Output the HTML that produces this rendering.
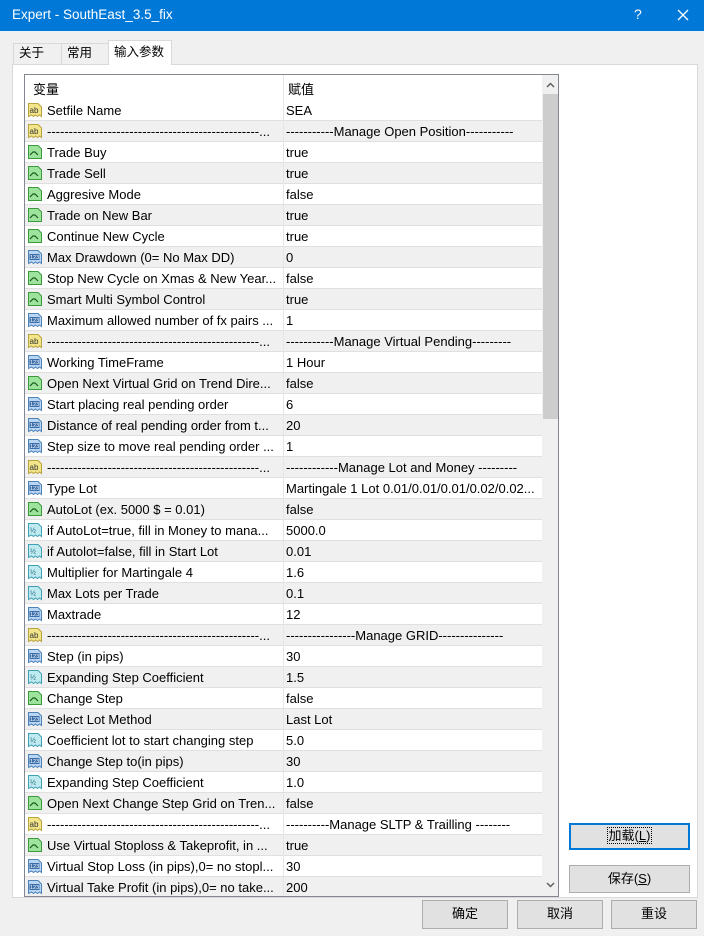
<!DOCTYPE html>
<html><head><meta charset="utf-8"><style>
*{margin:0;padding:0;box-sizing:border-box}
body{width:704px;height:936px;background:#f0f0f0;font-family:"Liberation Sans","Noto Sans CJK SC",sans-serif;font-size:13px;color:#000;position:relative;overflow:hidden}
.title{position:absolute;left:0;top:0;width:704px;height:31px;background:#0078d7;color:#fff;font-size:13.5px}
.abs{position:absolute}
.tab{position:absolute;top:43px;height:21px;border:1px solid #d9d9d9;border-bottom:none;background:#f0f0f0;font-size:12.5px;padding:0 5px;line-height:19px}
.panel{position:absolute;left:12px;top:64px;width:686px;height:834px;background:#fff;border:1px solid #d9d9d9}
.tbl{position:absolute;left:24px;top:74px;width:535px;height:823px;border:1px solid #828790;background:#fff;overflow:hidden}
.row{position:absolute;left:0;width:517px;height:21px;border-bottom:1px solid #e0e0e0}
.row.g{background:#f0f0f0}
.row span{position:absolute;top:3px;white-space:nowrap;overflow:hidden}
.n{left:22px;width:235px}
.v{left:261px;width:254px}
.row .ic{position:absolute;left:2px;top:2px;width:16px;height:16px}
.col{position:absolute;left:258px;top:0;width:1px;height:823px;background:#e5e5e5}
.sb{position:absolute;left:517px;top:0;width:17px;height:821px;background:#f0f0f0}
.btn{position:absolute;background:#e1e1e1;border:1px solid #adadad;text-align:center;line-height:26px;font-size:13px}
</style></head><body>
<div class="title"><span class="abs" style="left:12px;top:7px">Expert - SouthEast_3.5_fix</span><span class="abs" style="left:634px;top:6px;font-size:14px">?</span>
<svg class="abs" style="left:677px;top:9px" width="12" height="12"><path d="M1 1L11 11M11 1L1 11" stroke="#fff" stroke-width="1.3"/></svg></div>
<div class="tab" style="left:13px;width:49px">关于</div>
<div class="tab" style="left:61px;width:48px">常用</div>
<div class="panel"></div>
<div class="tab" style="left:108px;top:40px;width:64px;height:25px;background:#fff;z-index:2;line-height:22px">输入参数</div>
<div class="tbl">
<div class="abs" style="left:0;top:0;width:517px;height:25px;background:#fff"><span class="abs" style="left:8px;top:4px">变量</span><span class="abs" style="left:263px;top:4px">赋值</span></div>
<div id="rows"></div>
<div class="col"></div>
<div class="sb">
<svg class="abs" style="left:4px;top:7px" width="9" height="6"><path d="M1 5L4.5 1.5L8 5" stroke="#606060" stroke-width="1.5" fill="none"/></svg>
<div class="abs" style="left:1px;top:19px;width:15px;height:325px;background:#cdcdcd"></div>
<svg class="abs" style="left:4px;top:807px" width="9" height="6"><path d="M1 1L4.5 4.5L8 1" stroke="#606060" stroke-width="1.5" fill="none"/></svg>
</div>
</div>
<div class="btn" style="left:569px;top:823px;width:121px;height:27px;border:2px solid #0078d7;line-height:22px"><span style="outline:1px dotted #000;padding:0 1px">加载(<u>L</u>)</span></div>
<div class="btn" style="left:569px;top:865px;width:121px;height:28px">保存(<u>S</u>)</div>
<div class="btn" style="left:422px;top:900px;width:86px;height:29px">确定</div>
<div class="btn" style="left:517px;top:900px;width:86px;height:29px">取消</div>
<div class="btn" style="left:611px;top:900px;width:86px;height:29px">重设</div>
<script>
var S='ab',B='b',I='i',D='d';
var DS='-------------------------------------------------...';
var rows=[
[S,'Setfile Name','SEA'],
[S,DS,'-----------Manage Open Position-----------'],
[B,'Trade Buy','true'],[B,'Trade Sell','true'],[B,'Aggresive Mode','false'],[B,'Trade on New Bar','true'],[B,'Continue New Cycle','true'],
[I,'Max Drawdown (0= No Max DD)','0'],[B,'Stop New Cycle on Xmas &amp; New Year...','false'],[B,'Smart Multi Symbol Control','true'],
[I,'Maximum allowed number of fx pairs ...','1'],
[S,DS,'-----------Manage Virtual Pending---------'],
[I,'Working TimeFrame','1 Hour'],[B,'Open Next Virtual Grid on Trend Dire...','false'],[I,'Start placing real pending order','6'],
[I,'Distance of real pending order from t...','20'],[I,'Step size to move real pending order ...','1'],
[S,DS,'------------Manage Lot and Money ---------'],
[I,'Type Lot','Martingale 1 Lot 0.01/0.01/0.01/0.02/0.02...'],[B,'AutoLot (ex. 5000 $ = 0.01)','false'],
[D,'if AutoLot=true, fill in Money to mana...','5000.0'],[D,'if Autolot=false, fill in Start Lot','0.01'],
[D,'Multiplier for Martingale 4','1.6'],[D,'Max Lots per Trade','0.1'],[I,'Maxtrade','12'],
[S,DS,'----------------Manage GRID---------------'],
[I,'Step (in pips)','30'],[D,'Expanding Step Coefficient','1.5'],[B,'Change Step','false'],[I,'Select Lot Method','Last Lot'],
[D,'Coefficient lot to start changing step','5.0'],[I,'Change Step to(in pips)','30'],[D,'Expanding Step Coefficient','1.0'],
[B,'Open Next Change Step Grid on Tren...','false'],
[S,DS,'----------Manage SLTP &amp; Trailling --------'],
[B,'Use Virtual Stoploss &amp; Takeprofit, in ...','true'],[I,'Virtual Stop Loss (in pips),0= no stopl...','30'],
[I,'Virtual Take Profit (in pips),0= no take...','200']];
var icons={
ab:'<svg class="ic" viewBox="0 0 16 16"><path d="M1.5 1.5H11L14.5 5V14.5L12.5 13L10.5 14.5L8.5 13L6.5 14.5L4.5 13L1.5 14.5Z" fill="#f3e58a" stroke="#b8a33c"/><text x="2.5" y="11" font-size="8" font-family="Liberation Sans" fill="#333">ab</text></svg>',
b:'<svg class="ic" viewBox="0 0 16 16"><path d="M1.5 1.5H11L14.5 5V14.5H1.5Z" fill="#9de39d" stroke="#3a9a3a"/><path d="M3 11L6 8H8L11 11" stroke="#1a5a1a" stroke-width="1.2" fill="none"/></svg>',
i:'<svg class="ic" viewBox="0 0 16 16"><path d="M1.5 1.5H11L14.5 5V14.5L12.5 13L10.5 14.5L8.5 13L6.5 14.5L4.5 13L1.5 14.5Z" fill="#b9d7f5" stroke="#4d82b8"/><rect x="2.5" y="5" width="10" height="6" fill="#3b6ea8"/><text x="3" y="10" font-size="5.5" font-family="Liberation Sans" fill="#fff">123</text></svg>',
d:'<svg class="ic" viewBox="0 0 16 16"><path d="M1.5 1.5H11L14.5 5V14.5L12.5 13L10.5 14.5L8.5 13L6.5 14.5L4.5 13L1.5 14.5Z" fill="#bfeaf0" stroke="#3ea0b4"/><text x="3" y="10.5" font-size="7" font-family="Liberation Sans" fill="#17607a">½</text></svg>'};
var h='';
rows.forEach(function(r,k){h+='<div class="row'+(k%2?' g':'')+'" style="top:'+(25+k*21)+'px">'+icons[r[0]]+'<span class="n">'+r[1]+'</span><span class="v">'+r[2]+'</span></div>';});
document.getElementById('rows').innerHTML=h;
</script>
</body></html>
